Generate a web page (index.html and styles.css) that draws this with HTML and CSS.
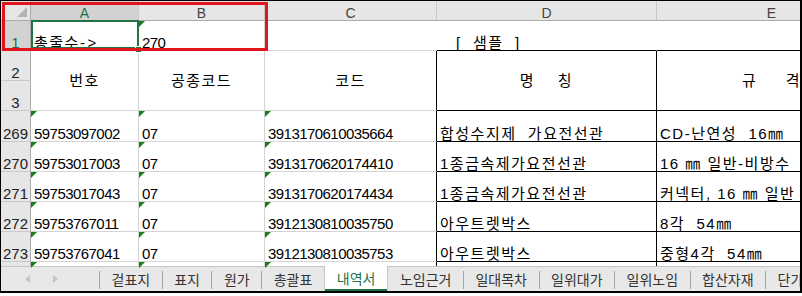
FILE: index.html
```html
<!DOCTYPE html>
<html lang="ko">
<head>
    <meta charset="UTF-8">
    <title>내역서</title>
    <link rel="stylesheet" href="styles.css">
</head>
<body>
    <div class="sheet">
        <div class="grid">
            <div class="c corner"></div>
            <div class="c hd hd-sel">A</div>
            <div class="c hd">B</div>
            <div class="c hd">C</div>
            <div class="c hd">D</div>
            <div class="c hd">E</div>

            <div class="c rh rh-sel">1</div>
            <div class="c ko sel">총줄수<span class="arrow">-&gt;</span><span class="handle"></span></div>
            <div class="c num tri">270</div>
            <div class="c no-r"></div>
            <div class="c ko no-r bk-b title">[  샘플  ]</div>
            <div class="c bk-b"></div>

            <div class="c rh">2</div>
            <div class="c ko mid span2">번호</div>
            <div class="c ko mid span2">공종코드</div>
            <div class="c ko mid span2 bk-r">코드</div>
            <div class="c ko mid span2 bk-r bk-b">명    칭</div>
            <div class="c ko mid span2 bk-r bk-b">규     격</div>
            <div class="c rh">3</div>

            <div class="c rh">269</div>
            <div class="c num tri">59753097002</div>
            <div class="c num tri">07</div>
            <div class="c num tri bk-r">3913170610035664</div>
            <div class="c ko bk-r bk-b">합성수지제  가요전선관</div>
            <div class="c ko bk-r bk-b">CD-난연성  16㎜</div>

            <div class="c rh">270</div>
            <div class="c num tri">59753017003</div>
            <div class="c num tri">07</div>
            <div class="c num tri bk-r">3913170620174410</div>
            <div class="c ko bk-r bk-b">1종금속제가요전선관</div>
            <div class="c ko bk-r bk-b">16 ㎜ 일반-비방수</div>

            <div class="c rh">271</div>
            <div class="c num tri">59753017043</div>
            <div class="c num tri">07</div>
            <div class="c num tri bk-r">3913170620174434</div>
            <div class="c ko bk-r bk-b">1종금속제가요전선관</div>
            <div class="c ko bk-r bk-b">커넥터, 16 ㎜ 일반</div>

            <div class="c rh">272</div>
            <div class="c num tri">59753767011</div>
            <div class="c num tri">07</div>
            <div class="c num tri bk-r">3912130810035750</div>
            <div class="c ko bk-r bk-b">아우트렛박스</div>
            <div class="c ko bk-r bk-b">8각  54㎜</div>

            <div class="c rh">273</div>
            <div class="c num tri">59753767041</div>
            <div class="c num tri">07</div>
            <div class="c num tri bk-r">3912130810035753</div>
            <div class="c ko bk-r bk-b">아우트렛박스</div>
            <div class="c ko bk-r bk-b">중형4각  54㎜</div>

            <div class="c rh part"></div>
            <div class="c part tri"></div>
            <div class="c part tri"></div>
            <div class="c part tri bk-r"></div>
            <div class="c part bk-r"></div>
            <div class="c part bk-r"></div>
        </div>

        <div class="tabs">
            <div class="nav">
                <span class="arr-l"></span>
                <span class="arr-r"></span>
            </div>
            <div class="tab">겉표지</div>
            <div class="tab">표지</div>
            <div class="tab">원가</div>
            <div class="tab">총괄표</div>
            <div class="tab on">내역서</div>
            <div class="tab">노임근거</div>
            <div class="tab">일대목차</div>
            <div class="tab">일위대가</div>
            <div class="tab">일위노임</div>
            <div class="tab">합산자재</div>
            <div class="tab">단가</div>
        </div>

        <div class="mark"></div>
    </div>
</body>
</html>
```

FILE: styles.css
```css
body { margin: 0; background: #fff; font-family: "Liberation Sans", "Noto Sans CJK KR", sans-serif; }

.sheet { position: relative; width: 802px; box-sizing: border-box; border: 1px solid #000; border-right-width: 2px; border-bottom-width: 2px; overflow: hidden; }

/* cell grid */
.grid { display: grid; grid-template-columns: 30px 108px 126px 172px 220px 230px; grid-template-rows: 20px 30px 30px 30px 31px 30px 30px 30px 30px 4px; }
.c { position: relative; box-sizing: border-box; min-width: 0; display: flex; align-items: flex-end; padding-left: 3px; border-right: 1px solid #d4d4d4; border-bottom: 1px solid #d4d4d4; font-size: 15px; line-height: 15px; color: #000; white-space: pre; }
.num { letter-spacing: -0.55px; }
.ko { letter-spacing: 1.5px; }
.arrow { letter-spacing: 2.5px; }
.mid { align-items: center; justify-content: center; padding-left: 0; }
.span2 { grid-row: span 2; }
.bk-r { border-right-color: #000; }
.bk-b { border-bottom-color: #000; }
.no-r { border-right-color: transparent; }
.title { padding-left: 19px; }
.part { border-bottom: none; }

.tri::before { content: ""; position: absolute; left: 0; top: 0; border-top: 6px solid #1b7d1b; border-right: 6px solid transparent; }

/* headers */
.corner { background: #e6e6e6; border-right-color: #ababab; border-bottom-color: #ababab; }
.corner::after { content: ""; position: absolute; right: 3px; bottom: 3px; border-left: 10px solid transparent; border-bottom: 10px solid #b4b4b4; }
.hd { background: #e6e6e6; border-right-color: #c8c8c8; border-bottom-color: #ababab; align-items: flex-start; justify-content: center; padding: 5px 0 0; font-size: 14px; line-height: 14px; color: #444; }
.hd-sel { background: #d2d2d2; color: #217346; }
.rh { background: #e6e6e6; border-right-color: #ababab; border-bottom-color: #c8c8c8; justify-content: center; padding-left: 0; color: #222; }
.rh-sel { background: #d2d2d2; color: #217346; }

/* selected cell */
.sel { z-index: 2; }
.sel::after { content: ""; position: absolute; top: -1px; left: 0; right: -1px; bottom: 1px; border: 2px solid #217346; }
.handle { position: absolute; left: 104px; top: 25px; width: 5px; height: 5px; background: #217346; border: 1px solid #fff; z-index: 3; }

/* sheet tabs */
.tabs { display: flex; height: 24px; border-top: 1px solid #c6c6c6; background: #e8e8e8; font-family: "Noto Sans CJK KR", sans-serif; font-size: 14px; color: #333; white-space: nowrap; }
.nav { flex: none; width: 98px; box-sizing: border-box; display: flex; align-items: center; gap: 23px; padding-left: 24px; }
.arr-l { border-right: 5px solid #c4c4c4; border-top: 4px solid transparent; border-bottom: 4px solid transparent; }
.arr-r { border-left: 5px solid #c4c4c4; border-top: 4px solid transparent; border-bottom: 4px solid transparent; }
.tab { flex: none; position: relative; padding: 0 11.5px 0 12.5px; line-height: 24px; }
.tab::before { content: ""; position: absolute; left: 0; top: 4px; bottom: 2px; width: 1px; background: #a6a6a6; }
.tab.on { margin-top: -1px; padding: 0 12px; background: #fff; color: #217346; border-left: 1px solid #c6c6c6; border-right: 1px solid #c6c6c6; box-shadow: inset 0 -2px 0 #217346; }
.tab.on::before, .tab.on + .tab::before { display: none; }
.tab.on + .tab { padding-left: 11.5px; }

/* red annotation box */
.mark { position: absolute; left: 1px; top: 1px; width: 266px; height: 49px; box-sizing: border-box; border: 3px solid #e3151c; z-index: 5; }
```
